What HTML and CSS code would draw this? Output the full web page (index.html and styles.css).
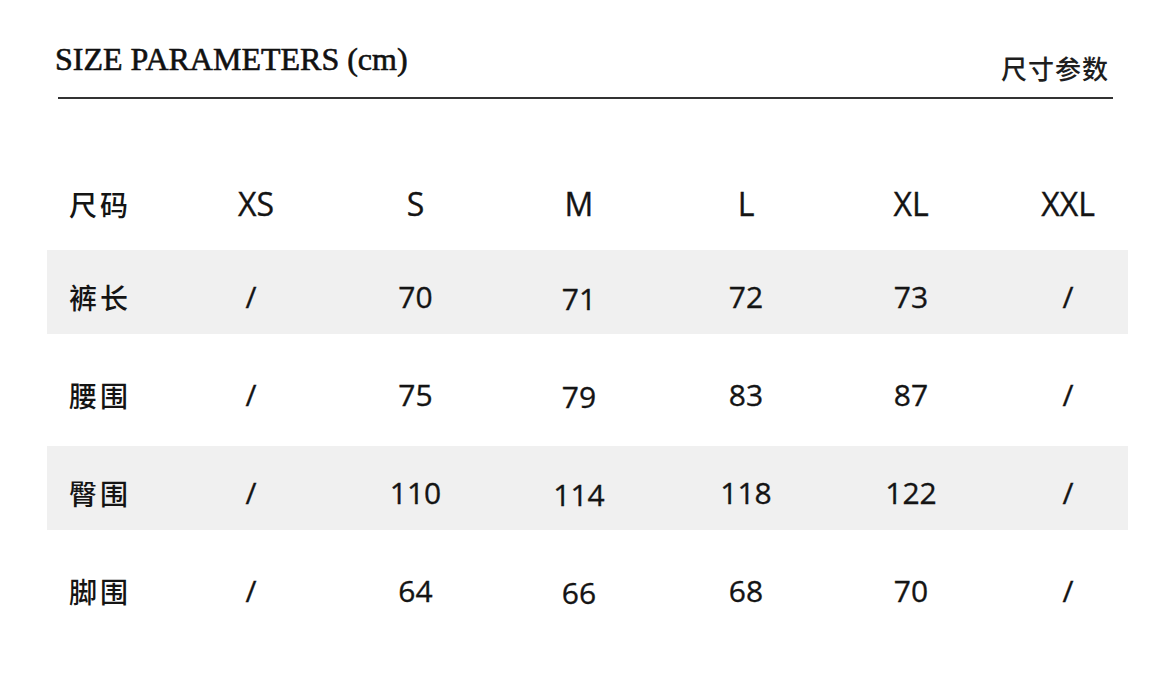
FILE: index.html
```html
<!DOCTYPE html>
<html lang="zh">
<head>
<meta charset="utf-8">
<title>Size Parameters</title>
<link rel="stylesheet" href="styles.css">
</head>
<body>
<div class="page">
  <header class="head">
    <h1 class="title">SIZE PARAMETERS (cm)</h1>
    <div class="title-cn">尺寸参数</div>
  </header>
  <div class="rule"></div>

  <div class="table">
    <div class="row row-head">
      <div class="cell label">尺码</div>
      <div class="cell">XS</div>
      <div class="cell">S</div>
      <div class="cell">M</div>
      <div class="cell">L</div>
      <div class="cell">XL</div>
      <div class="cell last">XXL</div>
    </div>
    <div class="row shaded">
      <div class="cell label">裤长</div>
      <div class="cell slash">/</div>
      <div class="cell">70</div>
      <div class="cell low">71</div>
      <div class="cell">72</div>
      <div class="cell">73</div>
      <div class="cell last slash">/</div>
    </div>
    <div class="row">
      <div class="cell label">腰围</div>
      <div class="cell slash">/</div>
      <div class="cell">75</div>
      <div class="cell low">79</div>
      <div class="cell">83</div>
      <div class="cell">87</div>
      <div class="cell last slash">/</div>
    </div>
    <div class="row shaded">
      <div class="cell label">臀围</div>
      <div class="cell slash">/</div>
      <div class="cell">110</div>
      <div class="cell low">114</div>
      <div class="cell">118</div>
      <div class="cell">122</div>
      <div class="cell last slash">/</div>
    </div>
    <div class="row">
      <div class="cell label">脚围</div>
      <div class="cell slash">/</div>
      <div class="cell">64</div>
      <div class="cell low">66</div>
      <div class="cell">68</div>
      <div class="cell">70</div>
      <div class="cell last slash">/</div>
    </div>
  </div>
</div>
</body>
</html>
```

FILE: styles.css
```css
html, body {
  margin: 0;
  padding: 0;
  background: #ffffff;
}

.page {
  width: 1170px;
  height: 698px;
  overflow: hidden;
  color: #151515;
}

.head {
  display: flex;
  justify-content: space-between;
  align-items: flex-start;
  padding: 0 61px 0 55px;
}

.title {
  margin: 43px 0 0 0;
  font-family: "Liberation Serif", "DejaVu Serif", serif;
  font-weight: 400;
  font-size: 32px;
  line-height: 1;
  letter-spacing: 0;
  color: #111;
  -webkit-text-stroke: 0.6px #111;
}

.title-cn {
  margin-top: 55px;
  font-family: "Noto Sans CJK SC", "Noto Sans", sans-serif;
  font-weight: 500;
  font-size: 26px;
  line-height: 1;
  letter-spacing: 1px;
  color: #1e1e1e;
}

.rule {
  margin: 16px 57px 0 58px;
  height: 2px;
  background: #333333;
}

.table {
  margin: 53px 42px 0 47px;
  display: flex;
  flex-direction: column;
  gap: 14px;
}

.row {
  display: grid;
  grid-template-columns: 130px 158px 161px 166px 168px 162px 136px;
  height: 84px;
  align-items: center;
  padding-top: 10px;
  box-sizing: border-box;
}

.row-head {
  padding-top: 20px;
}

.row-head .cell {
  font-size: 32px;
}

.row-head .label {
  font-size: 28px;
}

.shaded {
  background: #f0f0f0;
}

.cell {
  font-family: "Open Sans", "Noto Sans", "Noto Sans CJK SC", sans-serif;
  font-weight: 400;
  font-size: 30px;
  line-height: 1;
  text-align: center;
  color: #141414;
  -webkit-text-stroke: 0.35px #141414;
}

.label {
  text-align: left;
  padding-left: 22px;
  font-family: "Noto Sans CJK SC", "Noto Sans", sans-serif;
  font-weight: 500;
  font-size: 28px;
  letter-spacing: 3px;
  -webkit-text-stroke: 0;
}

.last {
  padding-left: 16px;
}

.slash {
  padding-right: 10px;
}

.last.slash {
  padding-right: 0;
}

.low {
  padding-top: 4px;
}
```
